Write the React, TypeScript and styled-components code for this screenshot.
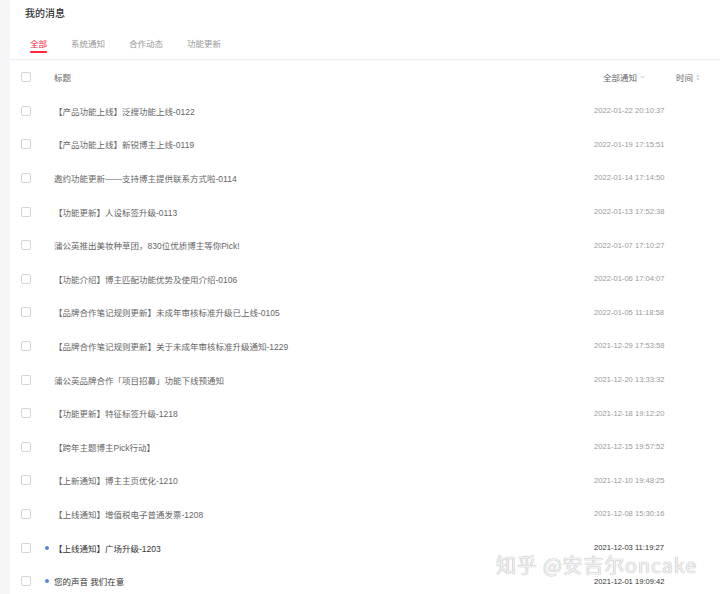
import React from 'react';
import styled, { createGlobalStyle } from 'styled-components';

type Message = {
  title: string;
  time: string;
  unread?: boolean;
};

const messages: Message[] = [
  { title: '【产品功能上线】泛搜功能上线-0122', time: '2022-01-22 20:10:37' },
  { title: '【产品功能上线】新锐博主上线-0119', time: '2022-01-19 17:15:51' },
  { title: '邀约功能更新——支持博主提供联系方式啦-0114', time: '2022-01-14 17:14:50' },
  { title: '【功能更新】人设标签升级-0113', time: '2022-01-13 17:52:38' },
  { title: '蒲公英推出美妆种草团，830位优质博主等你Pick!', time: '2022-01-07 17:10:27' },
  { title: '【功能介绍】博主匹配功能优势及使用介绍-0106', time: '2022-01-06 17:04:07' },
  { title: '【品牌合作笔记规则更新】未成年审核标准升级已上线-0105', time: '2022-01-05 11:18:58' },
  { title: '【品牌合作笔记规则更新】关于未成年审核标准升级通知-1229', time: '2021-12-29 17:53:58' },
  { title: '蒲公英品牌合作「项目招募」功能下线预通知', time: '2021-12-20 13:33:32' },
  { title: '【功能更新】特征标签升级-1218', time: '2021-12-18 19:12:20' },
  { title: '【跨年主题博主Pick行动】', time: '2021-12-15 19:57:52' },
  { title: '【上新通知】博主主页优化-1210', time: '2021-12-10 19:48:25' },
  { title: '【上线通知】增值税电子普通发票-1208', time: '2021-12-08 15:30:16' },
  { title: '【上线通知】广场升级-1203', time: '2021-12-03 11:19:27', unread: true },
  { title: '您的声音 我们在意', time: '2021-12-01 19:09:42', unread: true },
];

const tabs = ['全部', '系统通知', '合作动态', '功能更新'];

const GlobalStyle = createGlobalStyle`
  html, body {
    margin: 0;
    padding: 0;
    background: #f5f6f8;
  }
  body {
    font-family: "Liberation Sans", "Noto Sans CJK SC", sans-serif;
    overflow: hidden;
  }
`;

const Page = styled.div`
  position: relative;
  display: flex;
  height: 594px;
  padding-left: 10px;
  background: #f5f6f8;
  overflow: hidden;
`;

const Panel = styled.div`
  flex: 1;
  display: flex;
  flex-direction: column;
  background: #fff;
`;

const HeaderCard = styled.div`
  flex-shrink: 0;
  height: 59px;
  padding: 0 0 0 15px;
  border-bottom: 1px solid #eceef1;
  box-shadow: 0 1px 2px rgba(0, 0, 0, 0.03);
`;

const PageTitle = styled.div`
  height: 28px;
  line-height: 28px;
  font-size: 10px;
  font-weight: 500;
  color: #333;
`;

const Tabs = styled.div`
  display: flex;
  gap: 24px;
  padding-left: 5px;
  margin-top: 8px;
`;

const Tab = styled.div<{ $active?: boolean }>`
  position: relative;
  height: 17px;
  line-height: 16px;
  font-size: 8.5px;
  color: ${(p) => (p.$active ? '#ff2442' : '#999')};

  &::after {
    content: '';
    display: ${(p) => (p.$active ? 'block' : 'none')};
    position: absolute;
    left: 0;
    right: 0;
    bottom: 0;
    height: 2px;
    border-radius: 1px;
    background: #ff2442;
  }
`;

const Table = styled.div`
  flex-shrink: 0;
  display: flex;
  flex-direction: column;
`;

const HeadRow = styled.div`
  display: grid;
  grid-template-columns: 34px 10px 1fr 73px 44px;
  align-items: center;
  height: 34px;
  font-size: 8.5px;
  color: #666;
`;

const Row = styled.div`
  display: grid;
  grid-template-columns: 34px 10px 1fr 126px;
  align-items: center;
  height: 33.6px;
`;

const CheckCell = styled.div`
  display: flex;
  padding-left: 11px;
`;

const Checkbox = styled.span`
  display: block;
  width: 8px;
  height: 8px;
  border: 1px solid #d4d4d4;
  border-radius: 2px;
  background: #fff;
`;

const DotCell = styled.div`
  display: flex;
  align-items: center;
`;

const Dot = styled.span`
  display: block;
  width: 4px;
  height: 4px;
  margin-left: 1px;
  border-radius: 50%;
  background: #5b86d4;
`;

const Title = styled.div<{ $unread?: boolean }>`
  font-size: 8.5px;
  color: ${(p) => (p.$unread ? '#333' : '#666')};
  white-space: nowrap;
`;

const Time = styled.div<{ $unread?: boolean }>`
  font-size: 7.6px;
  color: ${(p) => (p.$unread ? '#333' : '#999')};
  white-space: nowrap;
`;

const HeadCell = styled.div`
  display: flex;
  align-items: center;
  gap: 3px;
  white-space: nowrap;
`;

const Watermark = styled.div`
  position: absolute;
  left: 496px;
  top: 552px;
  font-family: "Noto Sans CJK SC", sans-serif;
  font-size: 20px;
  line-height: 26px;
  color: rgba(255, 255, 255, 0.9);
  letter-spacing: 0.8px;
  text-shadow: 0 0 1px rgba(0, 0, 0, 0.35), 0 0 1px rgba(0, 0, 0, 0.2);
  pointer-events: none;
  white-space: nowrap;
`;

const Caret = () => (
  <svg width="5" height="4" viewBox="0 0 5 4">
    <path d="M0.5 1 L2.5 3 L4.5 1" fill="none" stroke="#bbb" strokeWidth="0.8" />
  </svg>
);

const SortIcon = () => (
  <svg width="4" height="7" viewBox="0 0 4 7">
    <path d="M2 0.5 L3.6 2.8 L0.4 2.8 Z" fill="#ccc" />
    <path d="M2 6.5 L3.6 4.2 L0.4 4.2 Z" fill="#ccc" />
  </svg>
);

const App = () => {
  return (
    <>
      <GlobalStyle />
      <Page>
        <Panel>
          <HeaderCard>
            <PageTitle>我的消息</PageTitle>
            <Tabs>
              {tabs.map((t, i) => (
                <Tab key={t} $active={i === 0}>
                  {t}
                </Tab>
              ))}
            </Tabs>
          </HeaderCard>
          <Table>
            <HeadRow>
              <CheckCell>
                <Checkbox />
              </CheckCell>
              <div />
              <HeadCell>标题</HeadCell>
              <HeadCell>
                全部通知 <Caret />
              </HeadCell>
              <HeadCell>
                时间 <SortIcon />
              </HeadCell>
            </HeadRow>
            {messages.map((m) => (
              <Row key={m.time}>
                <CheckCell>
                  <Checkbox />
                </CheckCell>
                <DotCell>{m.unread && <Dot />}</DotCell>
                <Title $unread={m.unread}>{m.title}</Title>
                <Time $unread={m.unread}>{m.time}</Time>
              </Row>
            ))}
          </Table>
        </Panel>
        <Watermark>知乎 @安吉尔oncake</Watermark>
      </Page>
    </>
  );
};

export default App;
